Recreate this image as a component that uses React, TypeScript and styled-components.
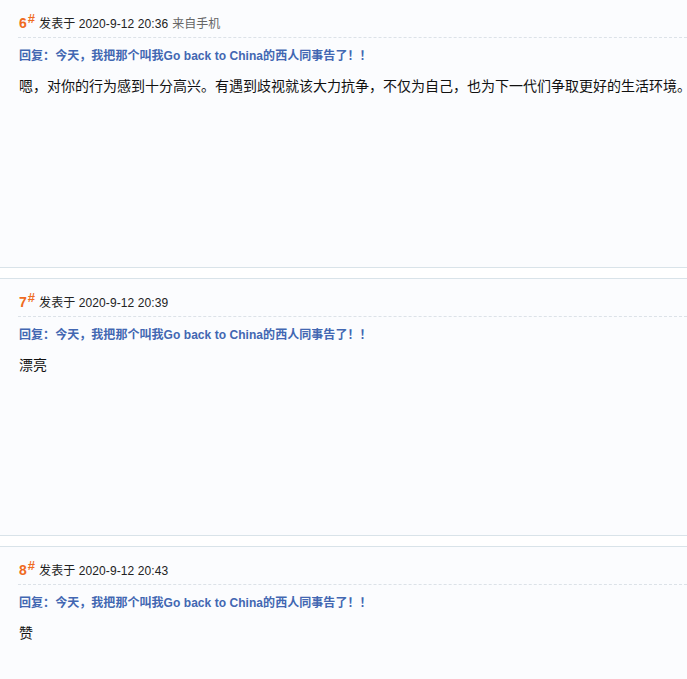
import React from 'react';
import styled, { createGlobalStyle } from 'styled-components';

const GlobalStyle = createGlobalStyle`
  body {
    margin: 0;
    background: #ffffff;
    font-family: "Liberation Sans", "Noto Sans CJK SC", sans-serif;
    overflow: hidden;
  }
`;

const Thread = styled.div`
  display: flex;
  flex-direction: column;
  gap: 10px;
  margin-top: -1px;
`;

const Post = styled.section<{ $minHeight: number }>`
  min-height: ${(p) => p.$minHeight}px;
  background: #fbfcfe;
  border-top: 1px solid #d9e3e9;
  border-bottom: 1px solid #d9e3e9;
  padding-left: 18px;
`;

const Header = styled.div`
  display: flex;
  align-items: baseline;
  gap: 4px;
  height: 38px;
  box-sizing: border-box;
  padding: 14px 0 0 1px;
  border-bottom: 1px dashed #dce2e8;
  font-size: 12px;
  line-height: 18px;
  color: #222;
  white-space: nowrap;
`;

const Floor = styled.em`
  font-style: normal;
  font-weight: bold;
  font-size: 14px;
  color: #ef6b21;

  sup {
    font-size: 13px;
    line-height: 0;
    margin-left: 1px;
    vertical-align: 5px;
  }
`;

const Time = styled.span`
  letter-spacing: 0.1px;
`;

const From = styled.span`
  color: #666;
`;

const Quote = styled.div`
  margin-top: 9px;
  padding-left: 1px;
  font-size: 12px;
  line-height: 18px;
  font-weight: bold;
  color: #4267b2;
  letter-spacing: 0.05px;
  white-space: nowrap;
`;

const Body = styled.div`
  margin-top: 10px;
  padding-left: 1px;
  font-size: 14px;
  line-height: 22px;
  color: #111;
  white-space: nowrap;
`;

type Reply = {
  floor: number;
  time: string;
  mobile?: boolean;
  text: string;
  height: number;
};

const quote = '回复：今天，我把那个叫我Go back to China的西人同事告了！！';

const replies: Reply[] = [
  {
    floor: 6,
    time: '2020-9-12 20:36',
    mobile: true,
    text: '嗯，对你的行为感到十分高兴。有遇到歧视就该大力抗争，不仅为自己，也为下一代们争取更好的生活环境。',
    height: 267,
  },
  { floor: 7, time: '2020-9-12 20:39', text: '漂亮', height: 256 },
  { floor: 8, time: '2020-9-12 20:43', text: '赞', height: 256 },
];

export default function App() {
  return (
    <>
      <GlobalStyle />
      <Thread>
        {replies.map((r) => (
          <Post key={r.floor} $minHeight={r.height}>
            <Header>
              <Floor>
                {r.floor}
                <sup>#</sup>
              </Floor>
              <Time>发表于 {r.time}</Time>
              {r.mobile && <From>来自手机</From>}
            </Header>
            <Quote>{quote}</Quote>
            <Body>{r.text}</Body>
          </Post>
        ))}
      </Thread>
    </>
  );
}
